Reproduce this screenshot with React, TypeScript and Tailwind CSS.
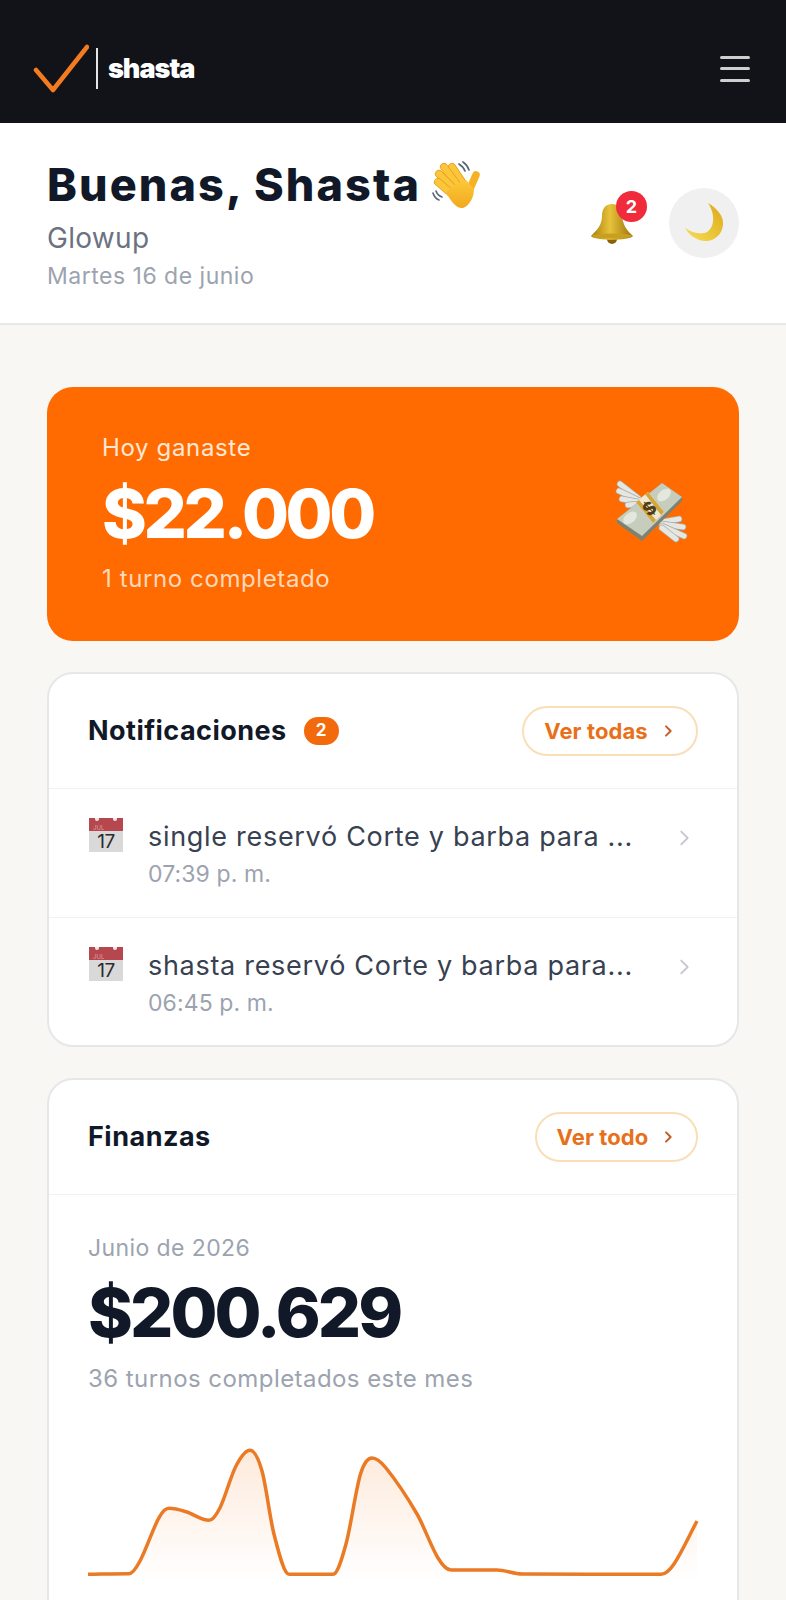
const font = { fontFamily: 'Inter, "Liberation Sans", sans-serif' };

function Hand() {
  const fingers: [number, number, number, number][] = [
    [31, 15, 43, 33],
    [23, 15, 37, 34],
    [18, 22, 33, 37],
    [17, 30, 31, 42],
  ];
  return (
    <svg viewBox="10 8 50 50" className="w-[50px] h-[50px]" fill="none">
      <defs>
        <linearGradient id="hand" x1="0" x2="0" y1="0" y2="1">
          <stop offset="0" stopColor="#fcc93a" />
          <stop offset="1" stopColor="#f2a81d" />
        </linearGradient>
      </defs>
      <path d="M38 12c3 2 5 4 6 7M42 10c3 2 5 5 6 8M12 41c1 3 3 6 6 7M15 39c1 3 3 5 6 6" stroke="#5b6678" strokeWidth="1.7" strokeLinecap="round" />
      <path d="M55 23 48 39" stroke="#f5b324" strokeWidth="7.5" strokeLinecap="round" />
      {fingers.map(([a, b, c, d]) => (
        <g key={`${a}-${b}`}>
          <path d={`M${a} ${b}L${c} ${d}`} stroke="#e39a18" strokeWidth="8" strokeLinecap="round" />
          <path d={`M${a} ${b}L${c} ${d}`} stroke="#fcc63a" strokeWidth="6.6" strokeLinecap="round" />
        </g>
      ))}
      <path d="M25 40 33 33 45 28 53 37C53 45 49 53 42 56 36 57 30 50 25 40Z" fill="url(#hand)" />
    </svg>
  );
}

function Bell() {
  return (
    <svg viewBox="0 0 46 44" className="w-[46px] h-[44px]">
      <defs>
        <linearGradient id="bell" x1="0" x2="1" y1="0" y2="0">
          <stop offset="0" stopColor="#a67c0c" />
          <stop offset="0.45" stopColor="#e8c33a" />
          <stop offset="1" stopColor="#9a7209" />
        </linearGradient>
      </defs>
      <circle cx="23" cy="37" r="5" fill="#8a6208" />
      <path d="M23 2c-7 0-10 5-10 12 0 9-5 14-11 20 4 5 38 5 42 0-6-5-10-11-11-20-1-7-3-12-10-12z" fill="url(#bell)" />
      <ellipse cx="23" cy="34" rx="20" ry="2.6" fill="#c99f20" />
    </svg>
  );
}

function Moon() {
  return (
    <svg viewBox="0 0 44 44" className="w-[44px] h-[44px]">
      <defs>
        <linearGradient id="moon" x1="0" x2="1" y1="1" y2="0">
          <stop offset="0" stopColor="#f7dd55" />
          <stop offset="1" stopColor="#dca918" />
        </linearGradient>
      </defs>
      <path d="M26 2C36 8 42 16 41 24 40 34 32 40 24 40 15 40 7 34 3 27 10 32 19 34 25 31 32 27 34 14 26 2Z" fill="url(#moon)" />
    </svg>
  );
}

const feathers: [number, number, number, number][] = [
  [58, 48, 40, 34],
  [58, 50, 39, 41],
  [58, 52, 42, 49],
  [60, 54, 48, 55],
  [82, 72, 99, 69],
  [82, 74, 103, 77],
  [82, 76, 104, 86],
  [82, 78, 96, 89],
];

function Money() {
  return (
    <svg viewBox="33 28 76 68" className="w-[76px] h-[68px] -mt-[4px]" fill="none">
      {feathers.map(([a, b, c, d]) => (
        <g key={`${c}-${d}`}>
          <path d={`M${a} ${b}L${c} ${d}`} stroke="#a9aaa4" strokeWidth="6.4" strokeLinecap="round" />
          <path d={`M${a} ${b}L${c} ${d}`} stroke="#e6e6e2" strokeWidth="5.2" strokeLinecap="round" />
        </g>
      ))}
      <path d="M37 73v-4L82 33l20 14v4L62 91z" fill="#7d8272" />
      <path d="M37 69 82 33l20 14-40 39z" fill="#c6cdbd" />
      <ellipse cx="50" cy="68" rx="8" ry="5" fill="#e3e7dc" transform="rotate(-40 50 68)" />
      <ellipse cx="84" cy="45" rx="8" ry="5" fill="#e3e7dc" transform="rotate(-40 84 45)" />
      <path d="M56 52 68 42 84 62 73 73z" fill="#efe9cf" />
      <path d="M56 52 59 50 76 70 73 73zM68 42 65 44 81 65 84 62z" fill="#d4a63a" />
      <text x="69" y="65" fontSize="18" fontWeight="800" textAnchor="middle" fill="#4f3d16" fontFamily="Inter, sans-serif" transform="rotate(-40 69 58)">$</text>
    </svg>
  );
}

function Calendar() {
  return (
    <div className="relative w-[34px] h-[34px] flex flex-col overflow-hidden shrink-0">
      <div className="h-[13px] bg-[#b5474e] flex items-end pl-[4px]">
        <span className="text-[6px] leading-[7px] text-[#e2a0a0]">JUL</span>
      </div>
      <div className="flex-1 bg-[#d9d9d9] flex items-center justify-center text-[19px] leading-none text-[#2b2b2b] -tracking-[0.5px]">17</div>
      <div className="absolute top-0 left-[6px] w-[4px] h-[3px] rounded-b-full bg-[#f3e4e4]" />
      <div className="absolute top-0 right-[6px] w-[4px] h-[3px] rounded-b-full bg-[#f3e4e4]" />
    </div>
  );
}

function Chevron({ className }: { className: string }) {
  return (
    <svg viewBox="0 0 24 24" fill="none" stroke="currentColor" strokeWidth="2" strokeLinecap="round" strokeLinejoin="round" className={className}>
      <path d="m9 5 7 7-7 7" />
    </svg>
  );
}

function Row({ text, time, border }: { text: string; time: string; border?: boolean }) {
  return (
    <div className={`flex h-[128px] pl-[40px] pr-[42px] pt-[29px] ${border ? 'border-t border-[#f1f1f0]' : ''}`}>
      <Calendar />
      <div className="ml-[25px] w-[488px]">
        <div className="text-[27px] leading-[38px] text-[#374151] tracking-[0.7px] truncate">{text}</div>
        <div className="text-[23px] leading-[32px] mt-[2px] text-[#9ca3af] tracking-[0.1px]">{time}</div>
      </div>
      <Chevron className="w-[22px] h-[22px] ml-auto mt-[9px] text-[#c4c7cc]" />
    </div>
  );
}

const points: [number, number][] = [
  [0, 133.3], [41, 132.7], [52, 120], [71, 76.7], [81, 67.3], [98, 70.7], [121, 79.3], [132, 66.7],
  [148, 25], [162, 9.3], [174, 30], [186, 93.3], [201, 133.3], [245, 133.3], [258, 103], [272.5, 33],
  [284, 17], [298, 27], [329, 73], [350, 117], [363, 129], [409, 129], [434, 133],
  [573, 133.3], [586, 123], [609, 80],
];

function smooth(p: [number, number][]) {
  const n = p.length;
  const m: number[] = [];
  for (let i = 0; i < n; i++) {
    if (i === 0 || i === n - 1) {
      const a = i === 0 ? 0 : n - 2;
      m.push((p[a + 1][1] - p[a][1]) / (p[a + 1][0] - p[a][0]));
      continue;
    }
    const l = p[i][1] - p[i - 1][1];
    const r = p[i + 1][1] - p[i][1];
    if (l * r <= 0 || Math.abs(l) < 1.5 || Math.abs(r) < 1.5) m.push(0);
    else m.push((p[i + 1][1] - p[i - 1][1]) / (p[i + 1][0] - p[i - 1][0]));
  }
  let d = `M${p[0][0]} ${p[0][1]}`;
  for (let i = 0; i < n - 1; i++) {
    const h = (p[i + 1][0] - p[i][0]) / 3;
    d += ` C${p[i][0] + h} ${p[i][1] + m[i] * h} ${p[i + 1][0] - h} ${p[i + 1][1] - m[i + 1] * h} ${p[i + 1][0]} ${p[i + 1][1]}`;
  }
  return d;
}

const line = smooth(points);

export default function App() {
  return (
    <div className="w-[786px] h-[1600px] overflow-hidden bg-[#f9f7f4]" style={font}>
      <header className="h-[123px] bg-[#111318] flex items-center justify-between pl-[33px] pr-[36px] pt-[14px]">
        <div className="flex items-center">
          <svg viewBox="0 0 56 50" className="w-[56px] h-[50px]" fill="none">
            <path d="M3 26 L20 46 L54 3" stroke="#f47b20" strokeWidth="4.5" strokeLinecap="round" strokeLinejoin="round" />
          </svg>
          <div className="w-[2px] h-[41px] bg-[#e5e5e5] ml-[7px]" />
          <span className="ml-[10px] text-[27px] font-black text-white -tracking-[1px] leading-none">shasta</span>
        </div>
        <div className="flex flex-col gap-[8.5px]">
          <div className="w-[30px] h-[3px] rounded bg-[#cfcfcf]" />
          <div className="w-[30px] h-[3px] rounded bg-[#cfcfcf]" />
          <div className="w-[30px] h-[3px] rounded bg-[#cfcfcf]" />
        </div>
      </header>

      <section className="h-[202px] bg-white border-b-2 border-[#e8e8e8] flex justify-between items-start pl-[47px] pr-[47px]">
        <div className="pt-[34px]">
          <div className="flex items-center">
            <h1 className="text-[45px] leading-[56px] font-extrabold text-[#111827] tracking-[2.1px]">Buenas, Shasta</h1>
            <span className="ml-[10px]"><Hand /></span>
          </div>
          <div className="text-[28px] leading-[38px] text-[#6b7280] mt-[6px] tracking-[0.3px]">Glowup</div>
          <div className="text-[23px] leading-[34px] text-[#9ca3af] mt-[2px] tracking-[0.5px]">Martes 16 de junio</div>
        </div>
        <div className="flex items-center gap-[34px] pt-[65px]">
          <div className="relative mt-[1px]">
            <Bell />
            <div className="absolute -top-[11px] right-[-12px] w-[31px] h-[31px] rounded-full bg-[#ef2b3c] text-white text-[18px] font-bold flex items-center justify-center">2</div>
          </div>
          <div className="w-[70px] h-[70px] rounded-full bg-[#f0f0f1] flex items-center justify-center"><Moon /></div>
        </div>
      </section>

      <main className="px-[47px] pt-[62px]">
        <div className="h-[254px] rounded-[26px] bg-[#ff6b00] pl-[55px] pr-[50px] flex items-center justify-between">
          <div>
            <div className="text-[24px] leading-[32px] text-[#ffe8d6] tracking-[0.65px] mb-[7px]">Hoy ganaste</div>
            <div className="text-[68px] leading-[84px] font-extrabold text-white -tracking-[3.4px]">$22.000</div>
            <div className="text-[24px] leading-[36px] text-[#ffd9bd] mt-[6px] tracking-[0.6px]">1 turno completado</div>
          </div>
          <Money />
        </div>

        <div className="mt-[31px] rounded-[26px] bg-white border-2 border-[#e6e7e9] overflow-hidden">
          <div className="h-[115px] pl-[39px] pr-[39px] flex items-center justify-between border-b border-[#f1f1f0]">
            <div className="flex items-center">
              <span className="text-[27px] font-bold text-[#111827] tracking-[0.45px]">Notificaciones</span>
              <span className="ml-[17px] w-[35px] h-[28px] rounded-full bg-[#f26a0c] text-white text-[17px] font-bold flex items-center justify-center">2</span>
            </div>
            <div className="h-[50px] w-[176px] rounded-full border-2 border-[#f8dfb8] flex items-center justify-center gap-[12px] text-[#e8701a] text-[22px] font-bold tracking-[0.1px]">
              Ver todas
              <Chevron className="w-[16px] h-[16px] text-[#c2602a] stroke-[3]" />
            </div>
          </div>
          <Row text="single reservó Corte y barba para ..." time="07:39 p. m." />
          <Row text="shasta reservó Corte y barba para..." time="06:45 p. m." border />
        </div>

        <div className="mt-[31px] rounded-[26px] bg-white border-2 border-[#e6e7e9] overflow-hidden h-[560px]">
          <div className="h-[115px] pl-[39px] pr-[39px] flex items-center justify-between border-b border-[#f1f1f0]">
            <span className="text-[27px] font-bold text-[#111827] tracking-[0.5px]">Finanzas</span>
            <div className="h-[50px] w-[163px] rounded-full border-2 border-[#f8dfb8] flex items-center justify-center gap-[12px] text-[#e8701a] text-[22px] font-bold tracking-[0.1px]">
              Ver todo
              <Chevron className="w-[16px] h-[16px] text-[#c2602a] stroke-[3]" />
            </div>
          </div>
          <div className="pl-[39px] pr-[39px] pt-[36px]">
            <div className="text-[23px] leading-[34px] text-[#9ca3af] tracking-[0.4px]">Junio de 2026</div>
            <div className="text-[68px] leading-[84px] font-extrabold text-[#111827] -tracking-[2.9px] mt-[5px]">$200.629</div>
            <div className="text-[24px] leading-[34px] text-[#9ca3af] mt-[8px] tracking-[0.44px]">36 turnos completados este mes</div>
            <svg viewBox="0 0 609 140" className="w-[609px] h-[140px] mt-[45px] overflow-visible" fill="none">
              <defs>
                <linearGradient id="fill" x1="0" x2="0" y1="0" y2="1">
                  <stop offset="0" stopColor="#f47b20" stopOpacity="0.16" />
                  <stop offset="1" stopColor="#f47b20" stopOpacity="0" />
                </linearGradient>
              </defs>
              <path d={`${line} L609 140 L0 140 Z`} fill="url(#fill)" />
              <path d={line} stroke="#ea7a24" strokeWidth="3.5" strokeLinejoin="round" />
            </svg>
          </div>
        </div>
      </main>
    </div>
  );
}
